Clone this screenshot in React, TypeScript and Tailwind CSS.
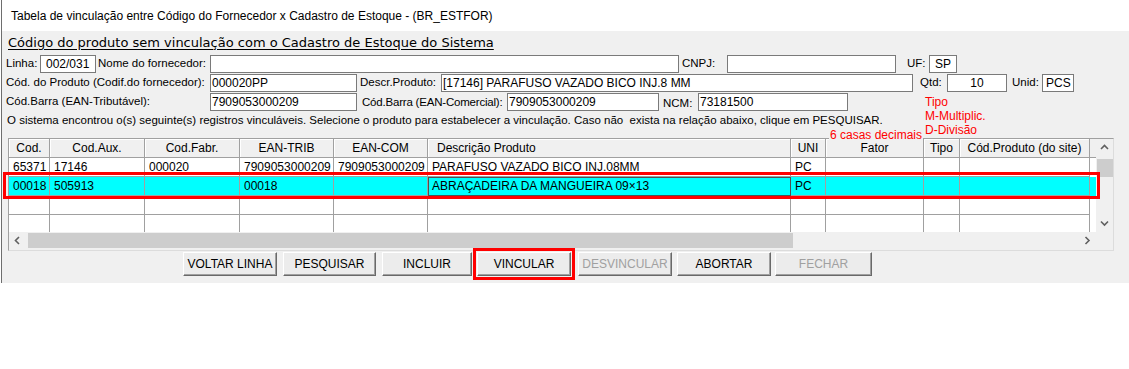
import React from 'react'

const COLS = [
  { label: 'Cod.', w: 'w-[41px]', align: 'justify-center' },
  { label: 'Cod.Aux.', w: 'w-[95px]', align: 'justify-center' },
  { label: 'Cod.Fabr.', w: 'w-[95px]', align: 'justify-center' },
  { label: 'EAN-TRIB', w: 'w-[94px]', align: 'justify-center' },
  { label: 'EAN-COM', w: 'w-[94px]', align: 'justify-center' },
  { label: 'Descrição Produto', w: 'w-[363px]', align: 'justify-start pl-[9px]' },
  { label: 'UNI', w: 'w-[35px]', align: 'justify-center' },
  { label: 'Fator', w: 'w-[98px]', align: 'justify-center' },
  { label: 'Tipo', w: 'w-[36px]', align: 'justify-center' },
  { label: 'Cód.Produto (do site)', w: 'w-[130px]', align: 'justify-center' },
]

const ROWS = [
  ['65371', '17146', '000020', '7909053000209', '7909053000209', 'PARAFUSO VAZADO BICO INJ.08MM', 'PC', '', '', ''],
  ['00018', '505913', '', '00018', '', 'ABRAÇADEIRA DA MANGUEIRA 09×13', 'PC', '', '', ''],
  ['', '', '', '', '', '', '', '', '', ''],
  ['', '', '', '', '', '', '', '', '', ''],
]

const BUTTONS = [
  { label: 'VOLTAR LINHA', cls: 'ml-[177px] w-[94px]' },
  { label: 'PESQUISAR', cls: 'ml-[6px] w-[93px]' },
  { label: 'INCLUIR', cls: 'ml-[6px] w-[90px]' },
  { label: 'VINCULAR', cls: 'ml-[5px] w-[94px] outline-solid outline-[3px] outline-[#ff0000] outline-offset-[1px]' },
  { label: 'DESVINCULAR', cls: 'ml-[7px] w-[94px]', disabled: true },
  { label: 'ABORTAR', cls: 'ml-[5px] w-[94px]' },
  { label: 'FECHAR', cls: 'ml-[4px] w-[97px]', disabled: true },
]

function Box({ w, children, className = '' }: { w: string; children?: React.ReactNode; className?: string }) {
  return (
    <div className={`h-[18px] bg-white border border-[#7a7a7a] text-[12px] leading-[16px] whitespace-nowrap overflow-hidden ${w} ${className}`}>
      {children}
    </div>
  )
}

function Chevron({ dir }: { dir: 'up' | 'down' | 'left' | 'right' }) {
  const d = {
    up: 'M1 5 L4.5 1.5 L8 5',
    down: 'M1 1.5 L4.5 5 L8 1.5',
    left: 'M5 1 L1.5 4.5 L5 8',
    right: 'M1.5 1 L5 4.5 L1.5 8',
  }[dir]
  const vertical = dir === 'up' || dir === 'down'
  return (
    <svg width={vertical ? 9 : 7} height={vertical ? 7 : 9} viewBox={vertical ? '0 0 9 7' : '0 0 7 9'}>
      <path d={d} fill="none" stroke="#606060" strokeWidth="1.6" />
    </svg>
  )
}

export default function App() {
  return (
    <div className="w-[1129px] h-[369px] bg-white text-black font-['Liberation_Sans',Arial,sans-serif]">
      <div className="h-[283px] ml-[1px] border-l border-[#6e6e6e] flex flex-col">
        <div className="h-[31px] shrink-0 bg-white flex items-center pl-[9px] text-[12px]">
          Tabela de vinculação entre Código do Fornecedor x Cadastro de Estoque - (BR_ESTFOR)
        </div>

        <div className="flex-1 bg-[#f0f0f0] relative pl-[4px] text-[11.5px]">
          <div className="h-[23px] pt-[3px] pl-[2px] text-[13px] leading-[17px] font-['DejaVu_Sans',sans-serif]">
            <span className="underline underline-offset-[2px]">Código do produto sem vinculação com o Cadastro de Estoque do Sistema</span>
          </div>

          <div className="flex items-center h-[19px]">
            <span className="w-[34px]">Linha:</span>
            <Box w="w-[56px]" className="pl-[5px]">002/031</Box>
            <span className="w-[114px] pl-[2px]">Nome do fornecedor:</span>
            <Box w="w-[469px]" />
            <span className="w-[48px] pl-[3px]">CNPJ:</span>
            <Box w="w-[169px]" />
            <span className="w-[33px] pl-[11px]">UF:</span>
            <Box w="w-[28px]" className="text-center">SP</Box>
          </div>

          <div className="flex items-center h-[19px]">
            <span className="w-[204px] whitespace-nowrap">Cód. do Produto (Codif.do fornecedor):</span>
            <Box w="w-[147px]" className="pl-[1px]">000020PP</Box>
            <span className="w-[84px] pl-[3px]">Descr.Produto:</span>
            <Box w="w-[472px]" className="pl-[1px]">[17146] PARAFUSO VAZADO BICO INJ.8 MM</Box>
            <span className="w-[34px] pl-[7px]">Qtd:</span>
            <Box w="w-[60px]" className="text-center">10</Box>
            <span className="w-[35px] pl-[5px]">Unid:</span>
            <Box w="w-[32px]" className="pl-[3px]">PCS</Box>
          </div>

          <div className="flex items-center h-[19px]">
            <span className="w-[204px] whitespace-nowrap">Cód.Barra (EAN-Tributável):</span>
            <Box w="w-[147px]" className="pl-[1px]">7909053000209</Box>
            <span className="w-[150px] pl-[5px] pt-[3px] whitespace-nowrap tracking-[-0.2px]">Cód.Barra (EAN-Comercial):</span>
            <Box w="w-[152px]" className="pl-[1px]">7909053000209</Box>
            <span className="w-[39px] pl-[4px] pt-[5px]">NCM:</span>
            <Box w="w-[150px]" className="pl-[1px]">73181500</Box>
          </div>

          <div className="h-[20px] flex items-center pl-[1px] whitespace-pre">
            O sistema encontrou o(s) seguinte(s) registros vinculáveis. Selecione o produto para estabelecer a vinculação. Caso não  exista na relação abaixo, clique em PESQUISAR.
          </div>

          <div className="mt-[7px] ml-[2px] w-[1106px] h-[113px] border border-t-[#a0a0a0] border-l-[#a0a0a0] border-r-[#dcdcdc] border-b-[#dcdcdc] flex flex-col text-[12px]">
            <div className="flex h-[93px]">
              <div className="w-[1087px] h-[93px] overflow-hidden bg-white">
                <div className="flex h-[19px]">
                  {COLS.map(c => (
                    <div key={c.label} className={`${c.w} ${c.align} h-[19px] bg-[#f0f0f0] border-r border-b border-r-[#a0a0a0] border-b-[#a0a0a0] shadow-[inset_1px_1px_0_#ffffff] flex items-center whitespace-nowrap`}>
                      {c.label}
                    </div>
                  ))}
                  <div className="flex-1 h-[19px] bg-[#f0f0f0] border-b border-b-[#a0a0a0]" />
                </div>
                {ROWS.map((row, r) => (
                  <div key={r} className={`flex h-[19px] ${r === 1 ? 'bg-[#00ffff]' : 'bg-white'}`}>
                    {row.map((v, i) => (
                      <div
                        key={i}
                        className={`${COLS[i].w} h-[19px] border-r border-b border-[#a0a0a0] pl-[4px] leading-[19px] whitespace-nowrap overflow-hidden ${r === 1 && i === 5 ? 'outline-solid outline-1 outline-[#505050] -outline-offset-1' : ''}`}
                      >
                        {v}
                      </div>
                    ))}
                  </div>
                ))}
              </div>
              <div className="w-[17px] h-[93px] bg-[#f0f0f0] flex flex-col items-center">
                <div className="h-[17px] flex items-center justify-center"><Chevron dir="up" /></div>
                <div className="mt-[3px] w-[16px] h-[18px] bg-[#cdcdcd]" />
                <div className="flex-1" />
                <div className="h-[17px] flex items-center justify-center"><Chevron dir="down" /></div>
              </div>
            </div>
            <div className="flex h-[17px]">
              <div className="w-[1087px] h-[17px] bg-[#f0f0f0] flex items-center">
                <div className="w-[17px] flex items-center justify-center"><Chevron dir="left" /></div>
                <div className="ml-[2px] w-[765px] h-[15px] bg-[#cdcdcd]" />
                <div className="flex-1" />
                <div className="w-[17px] flex items-center justify-center"><Chevron dir="right" /></div>
              </div>
              <div className="w-[17px] h-[17px] bg-[#f0f0f0]" />
            </div>
          </div>

          <div className="flex mt-[1px]">
            {BUTTONS.map(b => (
              <button
                key={b.label}
                className={`${b.cls} h-[24px] bg-[#ececec] border border-t-white border-l-white border-r-[#696969] border-b-[#696969] shadow-[inset_-1px_-1px_0_#a0a0a0] text-[12px] ${b.disabled ? 'text-[#a0a0a0]' : 'text-black'}`}
              >
                {b.label}
              </button>
            ))}
          </div>

          <div className="absolute left-[923px] top-[64px] text-[12px] leading-[14px] text-[#ff0000]">
            <div>Tipo</div>
            <div>M-Multiplic.</div>
            <div>D-Divisão</div>
          </div>
          <div className="absolute left-[827px] top-[98px] px-[1px] bg-[#f0f0f0] text-[12px] leading-[13px] text-[#ff0000]">
            6 casas decimais
          </div>
          <div className="absolute left-[1px] top-[141px] w-[1097px] h-[27px] border-[3px] border-[#ff0000]" />
        </div>
      </div>
    </div>
  )
}
